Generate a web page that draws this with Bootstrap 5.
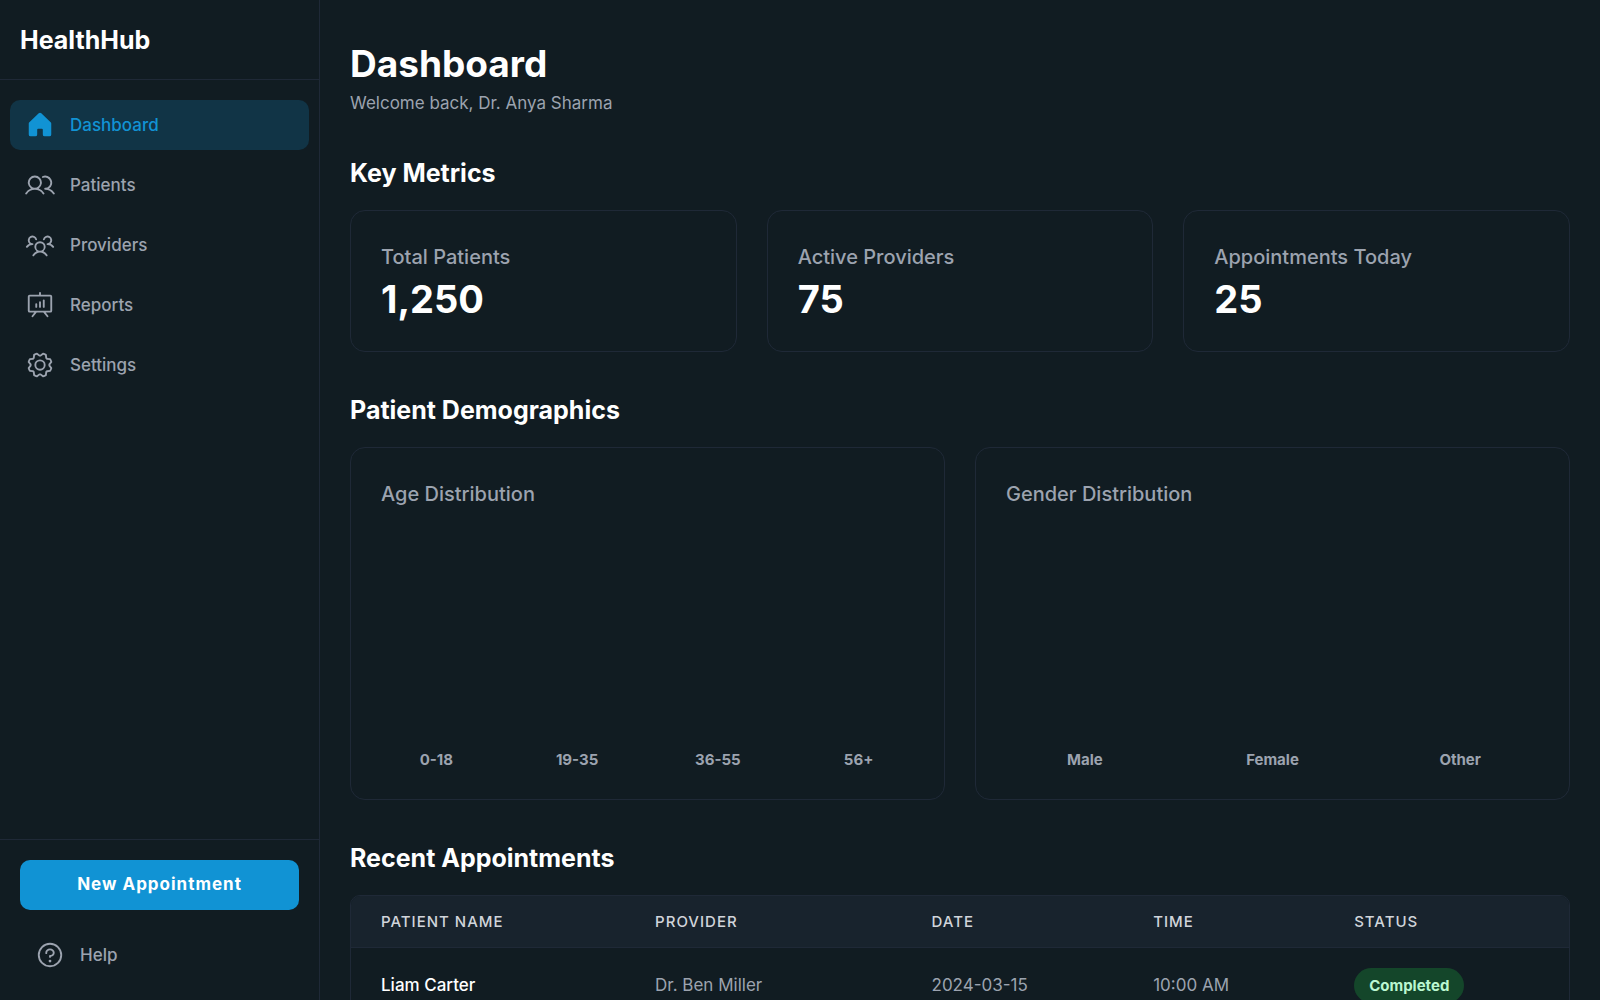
<!DOCTYPE html>
<html lang="en" data-bs-theme="dark">
<head>
<meta charset="utf-8">
<meta name="viewport" content="width=device-width, initial-scale=1">
<title>HealthHub Dashboard</title>
<link href="https://cdn.jsdelivr.net/npm/bootstrap@5.3.0/dist/css/bootstrap.min.css" rel="stylesheet">
<style>
  :root {
    --hh-bg: #111c22;
    --hh-line: #1f2937;
    --hh-muted: #9ca3af;
    --hh-primary: #1193d4;
  }
  body { background: var(--hh-bg); color: #fff; font-family: Inter, "Liberation Sans", sans-serif; font-size: 17px; line-height: 25px; }
  .sidebar { width: 320px; border-right: 1px solid var(--hh-line); }
  .brand { padding: 20px 20px 19px; font-size: 25px; line-height: 40px; font-weight: 700; border-bottom: 1px solid var(--hh-line); }
  .side-nav { padding: 20px 10px; gap: 10px; }
  .side-nav .nav-link, .help-link { display: flex; align-items: center; gap: 15px; height: 50px; padding: 0 15px; border-radius: 10px; color: var(--hh-muted); font-weight: 500; text-decoration: none; }
  .side-nav .nav-link:hover, .help-link:hover { color: #fff; }
  .side-nav .nav-link.active { background: #113446; color: var(--hh-primary); }
  .icon { width: 30px; height: 30px; fill: currentColor; flex: none; }
  .side-foot { padding: 20px; gap: 20px; border-top: 1px solid var(--hh-line); }
  .btn-new { --bs-btn-bg: var(--hh-primary); --bs-btn-color: #fff; --bs-btn-hover-bg: #0f83bd; --bs-btn-hover-color: #fff; height: 50px; border: 0; border-radius: 10px; font-size: 17px; font-weight: 700; letter-spacing: 1px; }
  .content { padding: 41px 30px 40px; overflow-y: auto; scrollbar-width: none; }
  .page-title { font-size: 37px; line-height: 45px; font-weight: 700; margin-bottom: 5px; }
  .muted { color: var(--hh-muted); }
  section { margin-top: 40px; }
  .section-title { font-size: 25px; line-height: 35px; font-weight: 700; margin-bottom: 19px; }
  section + section { margin-top: 41px; }
  .grid-gap { --bs-gutter-x: 30px; --bs-gutter-y: 30px; }
  .panel { height: 100%; padding: 31px 30px 29px; border: 1px solid var(--hh-line); border-radius: 15px; }
  .panel-title { font-size: 20px; line-height: 30px; font-weight: 500; color: var(--hh-muted); margin: 0; }
  .figure-value { font-size: 38px; line-height: 45px; font-weight: 700; margin: 5px 0 0; }
  .chart { display: grid; grid-auto-flow: column; grid-auto-columns: 1fr; gap: 30px; height: 241px; margin-top: 20px; align-items: end; }
  .chart-label { font-size: 15px; line-height: 21px; font-weight: 700; color: var(--hh-muted); text-align: center; }
  .table-box { border: 1px solid var(--hh-line); border-radius: 10px; overflow: hidden; }
  .visits { --bs-table-bg: transparent; --bs-table-color: var(--hh-muted); margin: 0; table-layout: fixed; border-color: var(--hh-line); white-space: nowrap; }
  .visits th, .visits td { vertical-align: middle; }
  .visits thead th { padding: 15px 30px; background: #18232d; color: #d1d5db; font-size: 15px; line-height: 21px; font-weight: 500; letter-spacing: 1px; text-transform: uppercase; }
  .visits tbody th, .visits tbody td { padding: 20px 30px; }
  .visits tbody th { color: #fff; font-weight: 500; }
  .visits tbody tr:last-child > * { border-bottom: 0; }
  .state { display: inline-block; padding: 5px 15px; border-radius: 50px; background: #14462a; color: #bbf7d0; font-size: 15px; line-height: 25px; font-weight: 700; vertical-align: top; }
</style>
<script src="https://cdn.jsdelivr.net/npm/bootstrap@5.3.0/dist/js/bootstrap.bundle.min.js" defer></script>
</head>
<body>
<div class="d-flex vh-100 overflow-hidden">
  <aside class="sidebar d-flex flex-column flex-shrink-0">
    <div class="brand">HealthHub</div>
    <nav class="side-nav nav flex-column flex-nowrap flex-grow-1" aria-label="Main">
      <a class="nav-link active" href="#" aria-current="page">
        <svg class="icon" viewBox="0 0 256 256" aria-hidden="true"><path d="M224,115.55V208a16,16,0,0,1-16,16H168a16,16,0,0,1-16-16V168a8,8,0,0,0-8-8H112a8,8,0,0,0-8,8v40a16,16,0,0,1-16,16H48a16,16,0,0,1-16-16V115.55a16,16,0,0,1,5.17-11.78l80-75.48.11-.11a16,16,0,0,1,21.53,0,1.14,1.14,0,0,0,.11.11l80,75.48A16,16,0,0,1,224,115.55Z"/></svg>
        Dashboard</a>
      <a class="nav-link" href="#">
        <svg class="icon" viewBox="0 0 256 256" aria-hidden="true"><path d="M117.25,157.92a60,60,0,1,0-66.5,0A95.83,95.83,0,0,0,3.53,195.63a8,8,0,1,0,13.4,8.74,80,80,0,0,1,134.14,0,8,8,0,0,0,13.4-8.74A95.83,95.83,0,0,0,117.25,157.92ZM40,108a44,44,0,1,1,44,44A44.05,44.05,0,0,1,40,108Zm210.14,98.7a8,8,0,0,1-11.07-2.33A79.83,79.83,0,0,0,172,168a8,8,0,0,1,0-16,44,44,0,1,0-16.34-84.87,8,8,0,1,1-5.94-14.85,60,60,0,0,1,55.53,105.64,95.83,95.83,0,0,1,47.22,37.71A8,8,0,0,1,250.14,206.7Z"/></svg>
        Patients</a>
      <a class="nav-link" href="#">
        <svg class="icon" viewBox="0 0 256 256" aria-hidden="true"><path d="M244.8,150.4a8,8,0,0,1-11.2-1.6A51.6,51.6,0,0,0,192,128a8,8,0,0,1-7.37-4.89,8,8,0,0,1,0-6.22A8,8,0,0,1,192,112a24,24,0,1,0-23.24-30,8,8,0,1,1-15.5-4A40,40,0,1,1,219,117.51a67.94,67.94,0,0,1,27.43,21.68A8,8,0,0,1,244.8,150.4ZM190.92,212a8,8,0,1,1-13.84,8,57,57,0,0,0-98.16,0,8,8,0,1,1-13.84-8,72.06,72.06,0,0,1,33.74-29.92,48,48,0,1,1,58.36,0A72.06,72.06,0,0,1,190.92,212ZM128,176a32,32,0,1,0-32-32A32,32,0,0,0,128,176ZM72,120a8,8,0,0,0-8-8A24,24,0,1,1,87.24,82a8,8,0,1,0,15.5-4A40,40,0,1,0,37,117.51,67.94,67.94,0,0,0,9.6,139.19a8,8,0,1,0,12.8,9.61A51.6,51.6,0,0,1,64,128,8,8,0,0,0,72,120Z"/></svg>
        Providers</a>
      <a class="nav-link" href="#">
        <svg class="icon" viewBox="0 0 256 256" aria-hidden="true"><path d="M216,40H136V24a8,8,0,0,0-16,0V40H40A16,16,0,0,0,24,56V176a16,16,0,0,0,16,16H79.36L57.75,219a8,8,0,0,0,12.5,10l29.59-37h56.32l29.59,37a8,8,0,1,0,12.5-10l-21.61-27H216a16,16,0,0,0,16-16V56A16,16,0,0,0,216,40Zm0,136H40V56H216V176ZM104,120v24a8,8,0,0,1-16,0V120a8,8,0,0,1,16,0Zm32-16v40a8,8,0,0,1-16,0V104a8,8,0,0,1,16,0Zm32-16v56a8,8,0,0,1-16,0V88a8,8,0,0,1,16,0Z"/></svg>
        Reports</a>
      <a class="nav-link" href="#">
        <svg class="icon" viewBox="0 0 256 256" aria-hidden="true"><path d="M128,80a48,48,0,1,0,48,48A48.05,48.05,0,0,0,128,80Zm0,80a32,32,0,1,1,32-32A32,32,0,0,1,128,160Zm88-29.84q.06-2.16,0-4.32l14.92-18.64a8,8,0,0,0,1.48-7.06,107.6,107.6,0,0,0-10.88-26.25,8,8,0,0,0-6-3.93l-23.72-2.64q-1.48-1.56-3-3L186,40.54a8,8,0,0,0-3.94-6,107.29,107.29,0,0,0-26.25-10.86,8,8,0,0,0-7.06,1.48L130.16,40Q128,40,125.84,40L107.2,25.11a8,8,0,0,0-7.06-1.48A107.6,107.6,0,0,0,73.89,34.51a8,8,0,0,0-3.93,6L67.32,64.27q-1.56,1.49-3,3L40.54,70a8,8,0,0,0-6,3.94,107.71,107.71,0,0,0-10.87,26.25,8,8,0,0,0,1.49,7.06L40,125.84Q40,128,40,130.16L25.11,148.8a8,8,0,0,0-1.48,7.06,107.6,107.6,0,0,0,10.88,26.25,8,8,0,0,0,6,3.93l23.72,2.64q1.49,1.56,3,3L70,215.46a8,8,0,0,0,3.94,6,107.71,107.71,0,0,0,26.25,10.87,8,8,0,0,0,7.06-1.49L125.84,216q2.16.06,4.32,0l18.64,14.92a8,8,0,0,0,7.06,1.48,107.21,107.21,0,0,0,26.25-10.88,8,8,0,0,0,3.93-6l2.64-23.72q1.56-1.48,3-3L215.46,186a8,8,0,0,0,6-3.94,107.71,107.71,0,0,0,10.87-26.25,8,8,0,0,0-1.49-7.06Zm-16.1-6.5a73.93,73.93,0,0,1,0,8.68,8,8,0,0,0,1.74,5.48l14.19,17.73a91.57,91.57,0,0,1-6.23,15L187,173.11a8,8,0,0,0-5.1,2.64,74.11,74.11,0,0,1-6.14,6.14,8,8,0,0,0-2.64,5.1l-2.51,22.58a91.32,91.32,0,0,1-15,6.23l-17.74-14.19a8,8,0,0,0-5-1.75h-.48a73.93,73.93,0,0,1-8.68,0,8,8,0,0,0-5.48,1.74L100.45,215.8a91.57,91.57,0,0,1-15-6.23L82.89,187a8,8,0,0,0-2.64-5.1,74.11,74.11,0,0,1-6.14-6.14,8,8,0,0,0-5.1-2.64L46.43,170.6a91.32,91.32,0,0,1-6.23-15l14.19-17.74a8,8,0,0,0,1.74-5.48,73.93,73.93,0,0,1,0-8.68,8,8,0,0,0-1.74-5.48L40.2,100.45a91.57,91.57,0,0,1,6.23-15L69,82.89a8,8,0,0,0,5.1-2.64,74.11,74.11,0,0,1,6.14-6.14A8,8,0,0,0,82.89,69L85.4,46.43a91.32,91.32,0,0,1,15-6.23l17.74,14.19a8,8,0,0,0,5.48,1.74,73.93,73.93,0,0,1,8.68,0,8,8,0,0,0,5.48-1.74L155.55,40.2a91.57,91.57,0,0,1,15,6.23L173.11,69a8,8,0,0,0,2.64,5.1,74.11,74.11,0,0,1,6.14,6.14,8,8,0,0,0,5.1,2.64l22.58,2.51a91.32,91.32,0,0,1,6.23,15l-14.19,17.74A8,8,0,0,0,199.87,123.66Z"/></svg>
        Settings</a>
    </nav>
    <div class="side-foot d-flex flex-column">
      <button type="button" class="btn btn-new w-100">New Appointment</button>
      <a class="help-link" href="#">
        <svg class="icon" viewBox="0 0 256 256" aria-hidden="true"><path d="M140,180a12,12,0,1,1-12-12A12,12,0,0,1,140,180ZM128,72c-22.06,0-40,16.15-40,36v4a8,8,0,0,0,16,0v-4c0-11,10.77-20,24-20s24,9,24,20-10.77,20-24,20a8,8,0,0,0-8,8v8a8,8,0,0,0,16,0v-.72c18.24-3.35,32-17.9,32-35.28C168,88.15,150.06,72,128,72Zm104,56A104,104,0,1,1,128,24,104.11,104.11,0,0,1,232,128Zm-16,0a88,88,0,1,0-88,88A88.1,88.1,0,0,0,216,128Z"/></svg>
        Help</a>
    </div>
  </aside>

  <main class="content flex-grow-1">
    <header>
      <h1 class="page-title">Dashboard</h1>
      <p class="muted mb-0">Welcome back, Dr. Anya Sharma</p>
    </header>

    <section>
      <h2 class="section-title">Key Metrics</h2>
      <div class="row row-cols-1 row-cols-md-3 grid-gap">
        <div class="col"><div class="panel"><h3 class="panel-title">Total Patients</h3><p class="figure-value">1,250</p></div></div>
        <div class="col"><div class="panel"><h3 class="panel-title">Active Providers</h3><p class="figure-value">75</p></div></div>
        <div class="col"><div class="panel"><h3 class="panel-title">Appointments Today</h3><p class="figure-value">25</p></div></div>
      </div>
    </section>

    <section>
      <h2 class="section-title">Patient Demographics</h2>
      <div class="row row-cols-1 row-cols-lg-2 grid-gap">
        <div class="col"><div class="panel">
          <h3 class="panel-title">Age Distribution</h3>
          <div class="chart">
            <div class="chart-label">0-18</div>
            <div class="chart-label">19-35</div>
            <div class="chart-label">36-55</div>
            <div class="chart-label">56+</div>
          </div>
        </div></div>
        <div class="col"><div class="panel">
          <h3 class="panel-title">Gender Distribution</h3>
          <div class="chart">
            <div class="chart-label">Male</div>
            <div class="chart-label">Female</div>
            <div class="chart-label">Other</div>
          </div>
        </div></div>
      </div>
    </section>

    <section>
      <h2 class="section-title">Recent Appointments</h2>
      <div class="table-box">
        <table class="table visits">
          <colgroup><col style="width:22.5%"><col style="width:22.7%"><col style="width:18.2%"><col style="width:16.5%"><col></colgroup>
          <thead>
            <tr><th scope="col">Patient Name</th><th scope="col">Provider</th><th scope="col">Date</th><th scope="col">Time</th><th scope="col">Status</th></tr>
          </thead>
          <tbody>
            <tr><th scope="row">Liam Carter</th><td>Dr. Ben Miller</td><td>2024-03-15</td><td>10:00 AM</td><td><span class="state">Completed</span></td></tr>
          </tbody>
        </table>
      </div>
    </section>
  </main>
</div>
</body>
</html>
